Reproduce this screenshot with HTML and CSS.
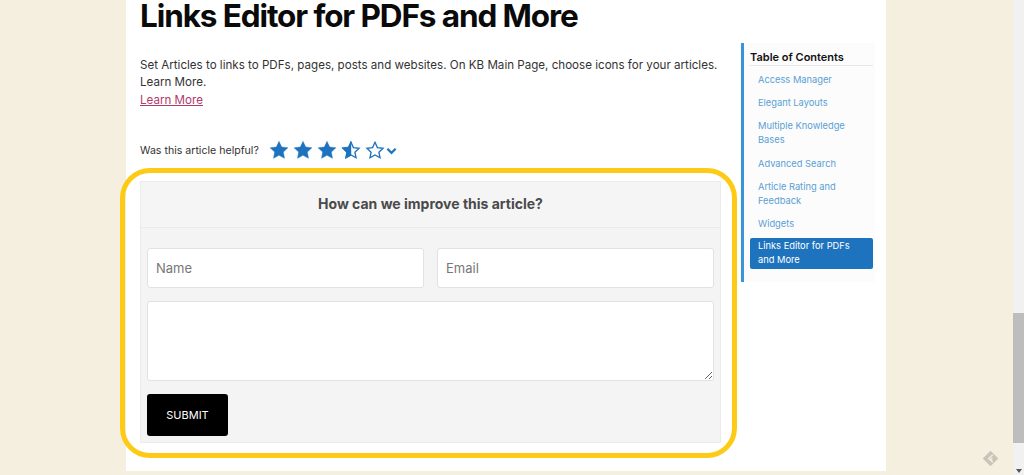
FILE: index.html
```html
<!DOCTYPE html>
<html lang="en">
<head>
<meta charset="utf-8">
<title>Links Editor for PDFs and More</title>
<link rel="stylesheet" href="styles.css">
</head>
<body>
<div class="viewport">
  <main class="sheet">
    <article class="article">
      <h1 class="title">Links Editor for PDFs and More</h1>
      <p class="intro">Set Articles to links to PDFs, pages, posts and websites. On KB Main Page, choose icons for your articles. Learn More.<br><a class="more" href="#">Learn More</a></p>
      <div class="rating">
        <span class="rating-label">Was this article helpful?</span>
        <span class="stars">
          <svg class="star" viewBox="0 0 24 24"><path class="full" d="M12 1.500l3.200 6.900 7.500.9-5.500 5.200 1.400 7.500-6.600-3.700-6.600 3.700 1.400-7.500L1.300 9.300l7.500-.9z"/></svg>
          <svg class="star" viewBox="0 0 24 24"><path class="full" d="M12 1.500l3.200 6.900 7.500.9-5.500 5.200 1.400 7.500-6.600-3.700-6.600 3.700 1.400-7.500L1.300 9.300l7.500-.9z"/></svg>
          <svg class="star" viewBox="0 0 24 24"><path class="full" d="M12 1.500l3.200 6.900 7.500.9-5.500 5.200 1.400 7.500-6.600-3.700-6.600 3.700 1.400-7.500L1.300 9.300l7.500-.9z"/></svg>
          <svg class="star" viewBox="0 0 24 24"><path class="outline" d="M12 2.800l2.900 6.300 6.800.8-5 4.700 1.300 6.800-6-3.400-6 3.400 1.300-6.800-5-4.700 6.800-.8z"/><path class="full" d="M12 1.500v16.800l-6.600 3.700 1.400-7.500L1.300 9.300l7.500-.9z"/></svg>
          <svg class="star" viewBox="0 0 24 24"><path class="outline" d="M12 2.800l2.900 6.300 6.800.8-5 4.700 1.300 6.800-6-3.400-6 3.400 1.300-6.800-5-4.700 6.800-.8z"/></svg>
          <svg class="chevron" viewBox="0 0 12 8"><path d="M1.500 1.500L6 6l4.500-4.500"/></svg>
        </span>
      </div>
      <form class="feedback">
        <h2 class="feedback-head">How can we improve this article?</h2>
        <div class="feedback-body">
          <div class="field-row">
            <input class="field" type="text" placeholder="Name">
            <input class="field" type="text" placeholder="Email">
          </div>
          <textarea class="message"></textarea>
          <button class="submit" type="button">SUBMIT</button>
        </div>
      </form>
    </article>
    <aside class="toc">
      <h3 class="toc-title">Table of Contents</h3>
      <ul class="toc-list">
        <li class="toc-item">Access Manager</li>
        <li class="toc-item">Elegant Layouts</li>
        <li class="toc-item">Multiple Knowledge Bases</li>
        <li class="toc-item">Advanced Search</li>
        <li class="toc-item">Article Rating and Feedback</li>
        <li class="toc-item">Widgets</li>
        <li class="toc-item active">Links Editor for PDFs and More</li>
      </ul>
    </aside>
    <div class="highlight"></div>
  </main>
  <div class="scrollbar"><div class="thumb"></div><span class="arrow"></span></div>
  <svg class="badge" viewBox="0 0 18 18"><path class="badge-shape" d="M9 .8l8.200 8.200L9 17.200.8 9z"/><path class="badge-mark" d="M11.500 5L7 9l4.500 4M11 8.500L9 10l2 1.500"/></svg>
</div>
</body>
</html>
```
FILE: styles.css
```css
* { box-sizing: border-box; }
html, body { margin: 0; height: 475px; overflow: hidden; }
body { background: #f5efe0; font-family: Inter, "Liberation Sans", sans-serif; color: #222; }
.viewport { position: relative; height: 475px; display: flex; justify-content: space-between; }
.sheet { position: relative; margin-left: 126px; width: 760px; height: 471px; background: #fff; padding-left: 14px; display: flex; }
.article { width: 581px; flex: none; }
.title { margin: 0; font-size: 31.500px; line-height: 32px; font-weight: 700; color: #0a0a0a; letter-spacing: -1.100px; white-space: nowrap; }
.intro { margin: 24.500px 0 0; font-size: 11.600px; line-height: 17.500px; color: #333; }
.more { color: #b23a6b; }
.rating { display: flex; align-items: center; margin-top: 28.500px; height: 24px; }
.rating-label { font-size: 10.600px; color: #333; margin: 1px 10px 0 0; }
.stars { display: flex; align-items: center; gap: 4px; }
.star { width: 20px; height: 20px; display: block; }
.full { fill: #1e73be; stroke: #1e73be; stroke-width: .5; }
.outline { fill: #fff; stroke: #1e73be; stroke-width: 1.600; }
.chevron { width: 11px; height: 8px; margin-left: -3px; margin-top: 2px; fill: none; stroke: #1e73be; stroke-width: 2.400; }
.feedback { margin-top: 19px; height: 262px; background: #f4f4f4; border: 1px solid #ebebeb; }
.feedback-head { margin: 0; height: 46px; line-height: 44px; text-align: center; font-size: 14px; font-weight: 700; color: #4a4a4a; background: #f5f5f5; border-bottom: 1px solid #ebebeb; }
.feedback-body { padding: 20px 6px 6px; }
.field-row { display: flex; gap: 13px; }
.field { flex: 1; min-width: 0; height: 40px; padding: 0 8px; background: #fff; border: 1px solid #e2e2e2; border-radius: 3px; font: 13px Inter, sans-serif; }
.field::placeholder { color: #777; opacity: 1; }
.message { display: block; width: 100%; height: 80px; margin-top: 13px; background: #fff; border: 1px solid #e2e2e2; border-radius: 3px; }
.submit { display: block; width: 81px; height: 42px; margin-top: 13px; background: #000; color: #fff; border: 0; border-radius: 3px; font: 11px Inter, sans-serif; }
.toc { margin: 43px 0 0 20px; width: 134px; height: 239px; background: #fcfcfc; border-left: 3px solid #3a95d8; padding: 7px 0 0 6px; }
.toc-title { margin: 0; height: 15px; font-size: 11px; line-height: 15px; font-weight: 600; color: #111; border-bottom: 1px solid #e6e6e6; width: 123px; box-sizing: content-box; }
.toc-list { list-style: none; margin: 0; padding: 0.700px 0 0; width: 123px; }
.toc-item { padding: 6px 8px 3.300px; font-size: 9.300px; line-height: 14px; color: #5a9fd4; }
.toc-item.active { margin-top: 3.300px; padding: 1px 8px 2px; background: #1e73be; color: #fff; border-radius: 2px; }
.highlight { position: absolute; left: -6px; top: 168px; width: 617px; height: 290px; border: 5px solid #fdcb16; border-radius: 30px; pointer-events: none; }
.scrollbar { position: relative; width: 11px; height: 475px; background: #f1f1f1; }
.thumb { position: absolute; top: 313px; left: 0; width: 100%; height: 130px; background: #bdbdbd; }
.arrow { position: absolute; bottom: 2px; left: 3px; border: 3px solid transparent; border-top: 4px solid #555; border-bottom: 0; }
.badge { position: absolute; right: 25px; top: 450px; width: 17px; height: 17px; }
.badge-shape { fill: #c9c4b8; }
.badge-mark { fill: none; stroke: #f5efe0; stroke-width: 1.300; }
```
